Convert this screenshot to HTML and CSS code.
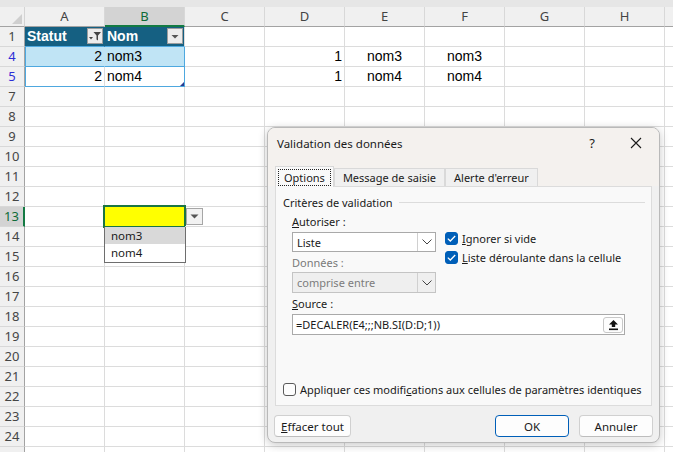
FILE: index.html
```html
<!DOCTYPE html>
<html lang="fr">
<head>
<meta charset="utf-8">
<title>Validation des données</title>
<link rel="stylesheet" href="styles.css">
</head>
<body>
<div class="sheet">
  <div class="strip"></div>
  <div class="row hdr">
    <div class="corner"><i class="tri"></i></div>
    <div class="ch">A</div><div class="ch csel">B</div><div class="ch">C</div><div class="ch">D</div><div class="ch">E</div><div class="ch">F</div><div class="ch">G</div><div class="ch">H</div><div class="ch"></div>
  </div>
  <div class="row">
    <div class="rh">1</div>
    <div class="c th thA">Statut<span class="fbtn"><svg width="14" height="14" viewBox="0 0 14 14"><path d="M1 8h4l-2 2.5z" fill="#444"/><path d="M5.5 3h7.5l-3 3.5v5l-1.5-1v-4z" fill="#444"/></svg></span></div>
    <div class="c th thB">Nom<span class="fbtn"><svg width="14" height="14" viewBox="0 0 14 14"><path d="M3.5 6h7l-3.5 3.5z" fill="#555"/></svg></span></div>
    <div class="c"></div><div class="c"></div><div class="c"></div><div class="c"></div><div class="c"></div><div class="c"></div><div class="c"></div>
  </div>
  <div class="row">
    <div class="rh flt">4</div>
    <div class="c tb band num tl">2</div>
    <div class="c tb band tr">nom3</div>
    <div class="c"></div><div class="c num">1</div><div class="c mid">nom3</div><div class="c mid">nom3</div><div class="c"></div><div class="c"></div><div class="c"></div>
  </div>
  <div class="row">
    <div class="rh flt">5</div>
    <div class="c tb num tl">2</div>
    <div class="c tb tr last">nom4<i class="rsz"></i></div>
    <div class="c"></div><div class="c num">1</div><div class="c mid">nom4</div><div class="c mid">nom4</div><div class="c"></div><div class="c"></div><div class="c"></div>
  </div>
  <div class="row"><div class="rh">7</div><div class="c"></div><div class="c"></div><div class="c"></div><div class="c"></div><div class="c"></div><div class="c"></div><div class="c"></div><div class="c"></div><div class="c"></div></div>
  <div class="row"><div class="rh">8</div><div class="c"></div><div class="c"></div><div class="c"></div><div class="c"></div><div class="c"></div><div class="c"></div><div class="c"></div><div class="c"></div><div class="c"></div></div>
  <div class="row"><div class="rh">9</div><div class="c"></div><div class="c"></div><div class="c"></div><div class="c"></div><div class="c"></div><div class="c"></div><div class="c"></div><div class="c"></div><div class="c"></div></div>
  <div class="row"><div class="rh">10</div><div class="c"></div><div class="c"></div><div class="c"></div><div class="c"></div><div class="c"></div><div class="c"></div><div class="c"></div><div class="c"></div><div class="c"></div></div>
  <div class="row"><div class="rh">11</div><div class="c"></div><div class="c"></div><div class="c"></div><div class="c"></div><div class="c"></div><div class="c"></div><div class="c"></div><div class="c"></div><div class="c"></div></div>
  <div class="row"><div class="rh">12</div><div class="c"></div><div class="c"></div><div class="c"></div><div class="c"></div><div class="c"></div><div class="c"></div><div class="c"></div><div class="c"></div><div class="c"></div></div>
  <div class="row">
    <div class="rh rsel">13</div>
    <div class="c"></div>
    <div class="c active">
      <span class="ddbtn"><svg width="9" height="5" viewBox="0 0 9 5"><path d="M0.5 0.5h8l-4 4z" fill="#555"/></svg></span>
      <div class="ddlist"><div class="ddi hi">nom3</div><div class="ddi">nom4</div></div>
    </div>
    <div class="c"></div><div class="c"></div><div class="c"></div><div class="c"></div><div class="c"></div><div class="c"></div><div class="c"></div>
  </div>
  <div class="row"><div class="rh">14</div><div class="c"></div><div class="c"></div><div class="c"></div><div class="c"></div><div class="c"></div><div class="c"></div><div class="c"></div><div class="c"></div><div class="c"></div></div>
  <div class="row"><div class="rh">15</div><div class="c"></div><div class="c"></div><div class="c"></div><div class="c"></div><div class="c"></div><div class="c"></div><div class="c"></div><div class="c"></div><div class="c"></div></div>
  <div class="row"><div class="rh">16</div><div class="c"></div><div class="c"></div><div class="c"></div><div class="c"></div><div class="c"></div><div class="c"></div><div class="c"></div><div class="c"></div><div class="c"></div></div>
  <div class="row"><div class="rh">17</div><div class="c"></div><div class="c"></div><div class="c"></div><div class="c"></div><div class="c"></div><div class="c"></div><div class="c"></div><div class="c"></div><div class="c"></div></div>
  <div class="row"><div class="rh">18</div><div class="c"></div><div class="c"></div><div class="c"></div><div class="c"></div><div class="c"></div><div class="c"></div><div class="c"></div><div class="c"></div><div class="c"></div></div>
  <div class="row"><div class="rh">19</div><div class="c"></div><div class="c"></div><div class="c"></div><div class="c"></div><div class="c"></div><div class="c"></div><div class="c"></div><div class="c"></div><div class="c"></div></div>
  <div class="row"><div class="rh">20</div><div class="c"></div><div class="c"></div><div class="c"></div><div class="c"></div><div class="c"></div><div class="c"></div><div class="c"></div><div class="c"></div><div class="c"></div></div>
  <div class="row"><div class="rh">21</div><div class="c"></div><div class="c"></div><div class="c"></div><div class="c"></div><div class="c"></div><div class="c"></div><div class="c"></div><div class="c"></div><div class="c"></div></div>
  <div class="row"><div class="rh">22</div><div class="c"></div><div class="c"></div><div class="c"></div><div class="c"></div><div class="c"></div><div class="c"></div><div class="c"></div><div class="c"></div><div class="c"></div></div>
  <div class="row"><div class="rh">23</div><div class="c"></div><div class="c"></div><div class="c"></div><div class="c"></div><div class="c"></div><div class="c"></div><div class="c"></div><div class="c"></div><div class="c"></div></div>
  <div class="row"><div class="rh">24</div><div class="c"></div><div class="c"></div><div class="c"></div><div class="c"></div><div class="c"></div><div class="c"></div><div class="c"></div><div class="c"></div><div class="c"></div></div>
  <div class="row"><div class="rh"></div><div class="c"></div><div class="c"></div><div class="c"></div><div class="c"></div><div class="c"></div><div class="c"></div><div class="c"></div><div class="c"></div><div class="c"></div></div>
</div>

<div class="dlg">
  <div class="dlg-title">
    <span class="ttl">Validation des données</span>
    <span class="help">?</span>
    <span class="close"><svg width="12" height="12" viewBox="0 0 12 12"><path d="M1 1L11 11M11 1L1 11" stroke="#1a1a1a" stroke-width="1.1" fill="none"/></svg></span>
  </div>
  <div class="tabs">
    <div class="tab on"><span class="focus">Options</span></div>
    <div class="tab">Message de saisie</div>
    <div class="tab">Alerte d'erreur</div>
  </div>
  <div class="panel">
    <div class="gtitle"><span>Critères de validation</span><i class="gline"></i></div>
    <div class="crit">
      <div class="cleft">
        <div class="lbl"><u>A</u>utoriser :</div>
        <div class="sel"><span class="sv">Liste</span><span class="chev"><svg width="10" height="6" viewBox="0 0 10 6"><path d="M0.5 0.5L5 5L9.5 0.5" fill="none" stroke="#444" stroke-width="1"/></svg></span></div>
        <div class="lbl dis">Données :</div>
        <div class="sel off"><span class="sv">comprise entre</span><span class="chev"><svg width="10" height="6" viewBox="0 0 10 6"><path d="M0.5 0.5L5 5L9.5 0.5" fill="none" stroke="#444" stroke-width="1"/></svg></span></div>
      </div>
      <div class="cright">
        <div class="chk"><span class="box on"><svg width="9" height="7" viewBox="0 0 9 7"><path d="M0.8 3.6L3.3 6L8.2 1" fill="none" stroke="#fff" stroke-width="1.3"/></svg></span><span><u>I</u>gnorer si vide</span></div>
        <div class="chk"><span class="box on"><svg width="9" height="7" viewBox="0 0 9 7"><path d="M0.8 3.6L3.3 6L8.2 1" fill="none" stroke="#fff" stroke-width="1.3"/></svg></span><span><u>L</u>iste déroulante dans la cellule</span></div>
      </div>
    </div>
    <div class="lbl src"><u>S</u>ource :</div>
    <div class="inp"><span class="iv">=DECALER(E4;;;NB.SI(D:D;1))</span><span class="refbtn"><svg width="11" height="12" viewBox="0 0 11 12"><path d="M5.5 1L1 5.5h2.8V8h3.4V5.5H10z" fill="#111"/><rect x="1" y="9.5" width="9" height="1.6" fill="#111"/></svg></span></div>
    <div class="fill"></div>
    <div class="chk apply"><span class="box"></span><span>Appliquer ces modifi<u>c</u>ations aux cellules de paramètres identiques</span></div>
  </div>
  <div class="btns">
    <button class="btn"><u>E</u>ffacer tout</button>
    <span class="grow"></span>
    <button class="btn ok">OK</button>
    <button class="btn">Annuler</button>
  </div>
</div>
</body>
</html>
```

FILE: styles.css
```css
html, body {
  margin: 0;
  padding: 0;
}
body {
  width: 673px;
  height: 452px;
  overflow: hidden;
  background: #fff;
  position: relative;
  font-family: "Liberation Sans", Arial, sans-serif;
}
.sheet {
  display: flex;
  flex-direction: column;
  width: 673px;
  height: 452px;
  overflow: hidden;
}
.strip {
  height: 7px;
  background: #e6e6e6;
  flex: none;
}
.row {
  display: flex;
  height: 20px;
  flex: none;
}
.corner {
  width: 25px;
  flex: none;
  box-sizing: border-box;
  background: #f0f0f0;
  border-right: 1px solid #d4d4d4;
  border-bottom: 1px solid #a3a3a3;
  position: relative;
}
.corner .tri {
  position: absolute;
  right: 2px;
  bottom: 2px;
  width: 0;
  height: 0;
  border-left: 10px solid transparent;
  border-bottom: 10px solid #cfcfcf;
}
.ch {
  width: 80px;
  flex: none;
  box-sizing: border-box;
  background: #f0f0f0;
  border-right: 1px solid #d8d8d8;
  border-bottom: 1px solid #a3a3a3;
  font: 13px/19px "Noto Sans", sans-serif;
  color: #444;
  text-align: center;
}
.ch.csel {
  background: #d3d3d3;
  color: #0e6b37;
  border-bottom: 2px solid #137a43;
  line-height: 18px;
}
.rh {
  width: 25px;
  flex: none;
  box-sizing: border-box;
  background: #f0f0f0;
  border-right: 1px solid #a3a3a3;
  border-bottom: 1px solid #d8d8d8;
  font: 13px/19px "Noto Sans", sans-serif;
  color: #454545;
  text-align: center;
}
.rh.flt {
  color: #2d2dd6;
}
.rh.rsel {
  background: #d3d3d3;
  color: #0e6b37;
  border-right: 2px solid #137a43;
}
.c {
  width: 80px;
  flex: none;
  box-sizing: border-box;
  border-right: 1px solid #dcdcdc;
  border-bottom: 1px solid #dcdcdc;
  font-size: 14px;
  line-height: 19px;
  padding: 0 2px;
  white-space: nowrap;
  color: #000;
  position: relative;
}
.c.num { text-align: right; }
.c.mid { text-align: center; }
.c.th {
  background: #156082;
  color: #fff;
  font-weight: bold;
  border-bottom-color: #4ea8df;
}
.c.thA { border-right-color: #156082; }
.c.thB { border-right-color: #dcdcdc; }
.fbtn {
  position: absolute;
  right: 1px;
  top: 1px;
  width: 16px;
  height: 16px;
  box-sizing: border-box;
  background: #ececec;
  border: 1px solid #9c9c9c;
  display: flex;
  align-items: center;
  justify-content: center;
}
.c.tb { border-bottom-color: #4ea8df; }
.c.band { background: #c0e4f5; }
.c.band.tl { border-right-color: #c0e4f5; }
.c.tl { box-shadow: inset 1px 0 0 #4ea8df; }
.c.tr { border-right-color: #4ea8df; }
.rsz {
  position: absolute;
  right: 0;
  bottom: 0;
  width: 0;
  height: 0;
  border-left: 4px solid transparent;
  border-bottom: 4px solid #2b3a8f;
}
.c.active { background: #ffff00; }
.c.active::after {
  content: "";
  position: absolute;
  left: -2px;
  top: -2px;
  right: -2px;
  bottom: -2px;
  border: 2px solid #1b7543;
  pointer-events: none;
}
.ddbtn {
  position: absolute;
  left: 81px;
  top: 1px;
  width: 17px;
  height: 17px;
  box-sizing: border-box;
  background: #f2f2f2;
  border: 1px solid #a6a6a6;
  display: flex;
  align-items: center;
  justify-content: center;
  z-index: 2;
}
.ddlist {
  position: absolute;
  left: -1px;
  top: 20px;
  width: 82px;
  box-sizing: border-box;
  background: #fff;
  border: 1px solid #6e6e6e;
  border-top: 0;
  z-index: 3;
  padding-bottom: 1px;
}
.ddi {
  height: 17px;
  padding-left: 6px;
  font: 11.5px/17px "Noto Sans", sans-serif;
  color: #1a1a1a;
}
.ddi.hi { background: #d9d9d9; }

/* dialog */
.dlg {
  position: absolute;
  left: 267px;
  top: 127px;
  width: 393px;
  height: 316px;
  box-sizing: border-box;
  background: #f0f0f0;
  border: 1px solid #b9b9b9;
  border-radius: 8px;
  box-shadow: 0 2px 10px rgba(0,0,0,0.22);
  display: flex;
  flex-direction: column;
  font: 11px "Noto Sans", sans-serif;
  color: #1a1a1a;
  overflow: hidden;
}
.dlg-title {
  height: 30px;
  flex: none;
  display: flex;
  align-items: center;
  background: #f4f1ee;
  padding-left: 9px;
}
.ttl {
  flex: 1;
  font-size: 11.5px;
}
.help {
  width: 24px;
  text-align: center;
  font-size: 13px;
  margin-right: 26px;
}
.close {
  width: 12px;
  height: 12px;
  margin-right: 17px;
  display: flex;
}
.tabs {
  display: flex;
  align-items: flex-end;
  padding: 7px 0 0 7px;
  height: 21px;
  flex: none;
  background: #f4f1ee;
}
.tab {
  height: 18px;
  box-sizing: border-box;
  border: 1px solid #d9d9d9;
  border-bottom: 0;
  padding: 0 8px;
  line-height: 17px;
  background: #f0f0f0;
  white-space: nowrap;
}
.tab.on {
  height: 21px;
  background: #f9f9f9;
  padding: 2px 2px 0 2px;
  position: relative;
  top: 1px;
}
.focus {
  display: inline-block;
  border: 1px dotted #222;
  padding: 0 5px;
  line-height: 15px;
}
.panel {
  margin: 0 7px;
  height: 220px;
  flex: none;
  box-sizing: border-box;
  background: #f9f9f9;
  border: 1px solid #dcdcdc;
  display: flex;
  flex-direction: column;
  padding: 7px 6px 9px 7px;
}
.gtitle {
  display: flex;
  align-items: center;
  height: 16px;
  white-space: nowrap;
}
.gline {
  flex: 1;
  height: 1px;
  background: #dcdcdc;
  margin-left: 6px;
}
.crit {
  display: flex;
  margin-top: 4px;
}
.cleft {
  margin-left: 9px;
  width: 144px;
  display: flex;
  flex-direction: column;
}
.lbl {
  height: 16px;
  line-height: 16px;
}
.lbl.dis { color: #7a7a7a; margin-top: 3px; }
.sel {
  height: 20px;
  margin-top: 2px;
  box-sizing: border-box;
  border: 1px solid #a9a9a9;
  background: #fff;
  display: flex;
  align-items: center;
}
.sel.off {
  height: 21px;
  background: #efefef;
  border-color: #c4c4c4;
  color: #7c7c7c;
  margin-top: 1px;
}
.sv { flex: 1; padding-left: 4px; }
.chev {
  width: 17px;
  height: 100%;
  border-left: 1px solid #d0d0d0;
  display: flex;
  align-items: center;
  justify-content: center;
}
.cright {
  margin-left: 9px;
  padding-top: 18px;
  display: flex;
  flex-direction: column;
  gap: 6px;
}
.chk {
  display: flex;
  align-items: center;
  gap: 4px;
  height: 13px;
  white-space: nowrap;
}
.box {
  width: 13px;
  height: 13px;
  box-sizing: border-box;
  border-radius: 3px;
  border: 1px solid #5a5a5a;
  background: #fdfdfd;
  display: flex;
  align-items: center;
  justify-content: center;
  flex: none;
}
.box.on {
  background: #005fb8;
  border-color: #005fb8;
}
.lbl.src { margin: 3px 0 0 9px; }
.inp {
  margin: 2px 0 0 9px;
  width: 333px;
  height: 21px;
  box-sizing: border-box;
  border: 1px solid #a9a9a9;
  background: #fff;
  display: flex;
  align-items: center;
}
.iv { flex: 1; padding-left: 3px; }
.refbtn {
  width: 20px;
  height: 16px;
  box-sizing: border-box;
  border: 1px solid #c8c8c8;
  border-radius: 3px;
  background: #fdfdfd;
  margin-right: 1px;
  display: flex;
  align-items: center;
  justify-content: center;
}
.fill { flex: 1; }
.chk.apply { gap: 4px; }
.btns {
  display: flex;
  align-items: center;
  padding: 9px 6px 0 6px;
  gap: 10px;
}
.grow { flex: 1; }
.btn {
  height: 22px;
  box-sizing: border-box;
  border: 1px solid #d0d0d0;
  border-bottom-color: #bdbdbd;
  border-radius: 4px;
  background: #fdfdfd;
  font: 11.5px "Noto Sans", sans-serif;
  color: #1a1a1a;
  padding: 0;
  width: 77px;
}
.btn.ok {
  width: 74px;
  border: 1px solid #005fb8;
}
.btns .btn:last-child { width: 74px; }
```
